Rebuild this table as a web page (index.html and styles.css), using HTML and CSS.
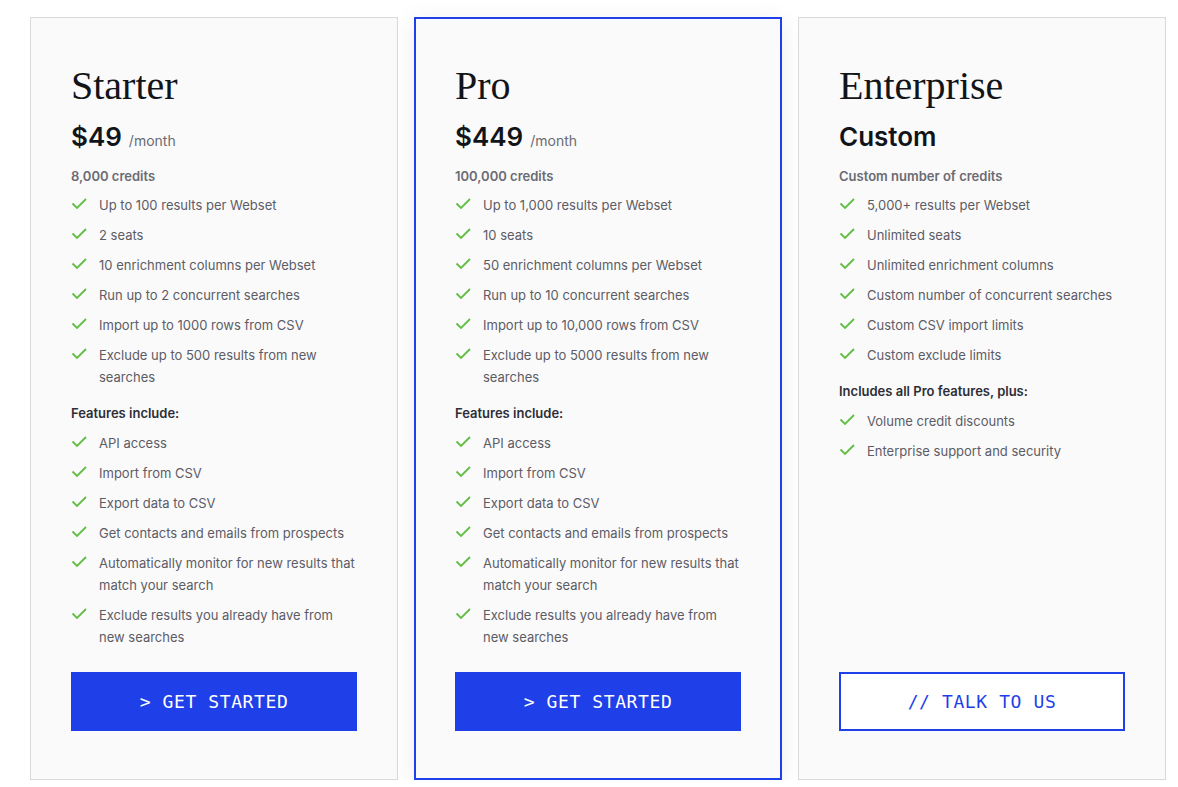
FILE: index.html
```html
<!DOCTYPE html>
<html lang="en">
<head>
    <meta charset="UTF-8">
    <meta name="viewport" content="width=device-width, initial-scale=1.0">
    <title>Pricing</title>
    <link rel="stylesheet" href="styles.css">
</head>
<body>
    <div class="pricing">
        <!-- Starter -->
        <div class="plan">
            <h2 class="plan-name">Starter</h2>
            <div class="price"><span class="amount">$49</span><span class="period">/month</span></div>
            <p class="credits">8,000 credits</p>
            <ul class="features">
                <li><svg class="check" viewBox="0 0 16 16"><path d="M1.5 7.5 L6 12 L15 3"/></svg><span>Up to 100 results per Webset</span></li>
                <li><svg class="check" viewBox="0 0 16 16"><path d="M1.5 7.5 L6 12 L15 3"/></svg><span>2 seats</span></li>
                <li><svg class="check" viewBox="0 0 16 16"><path d="M1.5 7.5 L6 12 L15 3"/></svg><span>10 enrichment columns per Webset</span></li>
                <li><svg class="check" viewBox="0 0 16 16"><path d="M1.5 7.5 L6 12 L15 3"/></svg><span>Run up to 2 concurrent searches</span></li>
                <li><svg class="check" viewBox="0 0 16 16"><path d="M1.5 7.5 L6 12 L15 3"/></svg><span>Import up to 1000 rows from CSV</span></li>
                <li><svg class="check" viewBox="0 0 16 16"><path d="M1.5 7.5 L6 12 L15 3"/></svg><span>Exclude up to 500 results from new searches</span></li>
            </ul>
            <p class="section-title">Features include:</p>
            <ul class="features">
                <li><svg class="check" viewBox="0 0 16 16"><path d="M1.5 7.5 L6 12 L15 3"/></svg><span>API access</span></li>
                <li><svg class="check" viewBox="0 0 16 16"><path d="M1.5 7.5 L6 12 L15 3"/></svg><span>Import from CSV</span></li>
                <li><svg class="check" viewBox="0 0 16 16"><path d="M1.5 7.5 L6 12 L15 3"/></svg><span>Export data to CSV</span></li>
                <li><svg class="check" viewBox="0 0 16 16"><path d="M1.5 7.5 L6 12 L15 3"/></svg><span>Get contacts and emails from prospects</span></li>
                <li><svg class="check" viewBox="0 0 16 16"><path d="M1.5 7.5 L6 12 L15 3"/></svg><span>Automatically monitor for new results that match your search</span></li>
                <li><svg class="check" viewBox="0 0 16 16"><path d="M1.5 7.5 L6 12 L15 3"/></svg><span>Exclude results you already have from new searches</span></li>
            </ul>
            <button class="btn btn-primary">&gt; GET STARTED</button>
        </div>

        <!-- Pro -->
        <div class="plan featured">
            <h2 class="plan-name">Pro</h2>
            <div class="price"><span class="amount">$449</span><span class="period">/month</span></div>
            <p class="credits">100,000 credits</p>
            <ul class="features">
                <li><svg class="check" viewBox="0 0 16 16"><path d="M1.5 7.5 L6 12 L15 3"/></svg><span>Up to 1,000 results per Webset</span></li>
                <li><svg class="check" viewBox="0 0 16 16"><path d="M1.5 7.5 L6 12 L15 3"/></svg><span>10 seats</span></li>
                <li><svg class="check" viewBox="0 0 16 16"><path d="M1.5 7.5 L6 12 L15 3"/></svg><span>50 enrichment columns per Webset</span></li>
                <li><svg class="check" viewBox="0 0 16 16"><path d="M1.5 7.5 L6 12 L15 3"/></svg><span>Run up to 10 concurrent searches</span></li>
                <li><svg class="check" viewBox="0 0 16 16"><path d="M1.5 7.5 L6 12 L15 3"/></svg><span>Import up to 10,000 rows from CSV</span></li>
                <li><svg class="check" viewBox="0 0 16 16"><path d="M1.5 7.5 L6 12 L15 3"/></svg><span>Exclude up to 5000 results from new searches</span></li>
            </ul>
            <p class="section-title">Features include:</p>
            <ul class="features">
                <li><svg class="check" viewBox="0 0 16 16"><path d="M1.5 7.5 L6 12 L15 3"/></svg><span>API access</span></li>
                <li><svg class="check" viewBox="0 0 16 16"><path d="M1.5 7.5 L6 12 L15 3"/></svg><span>Import from CSV</span></li>
                <li><svg class="check" viewBox="0 0 16 16"><path d="M1.5 7.5 L6 12 L15 3"/></svg><span>Export data to CSV</span></li>
                <li><svg class="check" viewBox="0 0 16 16"><path d="M1.5 7.5 L6 12 L15 3"/></svg><span>Get contacts and emails from prospects</span></li>
                <li><svg class="check" viewBox="0 0 16 16"><path d="M1.5 7.5 L6 12 L15 3"/></svg><span>Automatically monitor for new results that match your search</span></li>
                <li><svg class="check" viewBox="0 0 16 16"><path d="M1.5 7.5 L6 12 L15 3"/></svg><span>Exclude results you already have from new searches</span></li>
            </ul>
            <button class="btn btn-primary">&gt; GET STARTED</button>
        </div>

        <!-- Enterprise -->
        <div class="plan">
            <h2 class="plan-name">Enterprise</h2>
            <div class="price"><span class="amount">Custom</span></div>
            <p class="credits">Custom number of credits</p>
            <ul class="features">
                <li><svg class="check" viewBox="0 0 16 16"><path d="M1.5 7.5 L6 12 L15 3"/></svg><span>5,000+ results per Webset</span></li>
                <li><svg class="check" viewBox="0 0 16 16"><path d="M1.5 7.5 L6 12 L15 3"/></svg><span>Unlimited seats</span></li>
                <li><svg class="check" viewBox="0 0 16 16"><path d="M1.5 7.5 L6 12 L15 3"/></svg><span>Unlimited enrichment columns</span></li>
                <li><svg class="check" viewBox="0 0 16 16"><path d="M1.5 7.5 L6 12 L15 3"/></svg><span>Custom number of concurrent searches</span></li>
                <li><svg class="check" viewBox="0 0 16 16"><path d="M1.5 7.5 L6 12 L15 3"/></svg><span>Custom CSV import limits</span></li>
                <li><svg class="check" viewBox="0 0 16 16"><path d="M1.5 7.5 L6 12 L15 3"/></svg><span>Custom exclude limits</span></li>
            </ul>
            <p class="section-title">Includes all Pro features, plus:</p>
            <ul class="features">
                <li><svg class="check" viewBox="0 0 16 16"><path d="M1.5 7.5 L6 12 L15 3"/></svg><span>Volume credit discounts</span></li>
                <li><svg class="check" viewBox="0 0 16 16"><path d="M1.5 7.5 L6 12 L15 3"/></svg><span>Enterprise support and security</span></li>
            </ul>
            <button class="btn btn-outline">// TALK TO US</button>
        </div>
    </div>
</body>
</html>
```

FILE: styles.css
```css
* {
    margin: 0;
    padding: 0;
    box-sizing: border-box;
}

body {
    background: #ffffff;
    font-family: Inter, "Noto Sans", sans-serif;
}

.pricing {
    display: grid;
    grid-template-columns: repeat(3, 368px);
    grid-template-rows: 763px;
    gap: 16px;
    margin: 17px 0 0 30px;
}

/* Cartões */
.plan {
    display: flex;
    flex-direction: column;
    background: #fafafa;
    border: 1px solid #d9d9d9;
    padding: 44px 40px 48px;
}

.plan.featured {
    border: 2px solid #1f3fe8;
    padding: 43px 39px 47px;
    box-shadow: 0 4px 24px rgba(0, 0, 0, 0.08);
}

.plan-name {
    font-family: "Liberation Serif", serif;
    font-weight: 400;
    font-size: 40px;
    line-height: 48px;
    color: #111418;
}

.price {
    display: flex;
    align-items: baseline;
    height: 32px;
    margin-top: 11px;
    line-height: 32px;
}

.amount {
    font-size: 26px;
    font-weight: 600;
    color: #111418;
}

.period {
    font-size: 14px;
    line-height: 1;
    color: #6b6b73;
    margin-left: 7px;
}

.credits {
    margin-top: 13px;
    font-size: 13px;
    line-height: 20px;
    font-weight: 600;
    color: #6b6b73;
}

.section-title {
    margin-top: 14px;
    font-size: 13px;
    line-height: 22px;
    font-weight: 600;
    color: #2e2e36;
}

/* Lista de recursos */
.features {
    list-style: none;
    display: flex;
    flex-direction: column;
    gap: 8px;
    margin-top: 8px;
}

.features li {
    display: flex;
    align-items: flex-start;
    font-size: 13px;
    line-height: 22px;
    color: #5c5c66;
}

.check {
    flex: none;
    width: 16px;
    height: 16px;
    margin: 2px 12px 0 0;
    fill: none;
    stroke: #62bd45;
    stroke-width: 1.8;
}

/* Botões */
.btn {
    margin-top: auto;
    height: 59px;
    width: 100%;
    font-family: "DejaVu Sans Mono", monospace;
    font-size: 18px;
    letter-spacing: 0.6px;
    cursor: pointer;
}

.btn-primary {
    background: #1f3fe8;
    color: #ffffff;
    border: none;
}

.btn-outline {
    background: #ffffff;
    color: #1f3fe8;
    border: 2px solid #1f3fe8;
}
```
